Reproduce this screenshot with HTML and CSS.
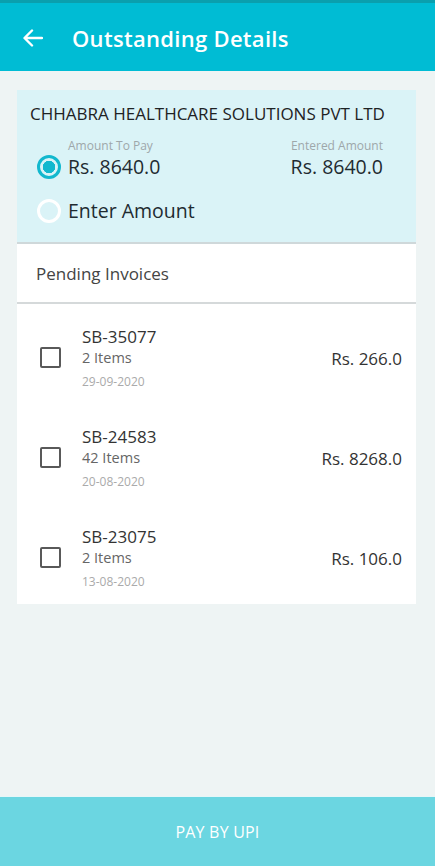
FILE: index.html
```html
<!DOCTYPE html>
<html lang="en">
<head>
    <meta charset="UTF-8">
    <meta name="viewport" content="width=device-width, initial-scale=1.0">
    <title>Outstanding Details</title>
    <link rel="stylesheet" href="styles.css">
</head>
<body>

<div class="page">
    <div class="app-bar">
        <svg class="back" width="20" height="18" viewBox="0 0 20 18">
            <path d="M19 9H2M9 1.5L1.5 9L9 16.5" fill="none" stroke="#fff" stroke-width="2.4" stroke-linecap="round" stroke-linejoin="round"/>
        </svg>
        <h1>Outstanding Details</h1>
    </div>

    <div class="content">
        <div class="card">
            <div class="summary">
                <div class="company">CHHABRA HEALTHCARE SOLUTIONS PVT LTD</div>
                <div class="amount-row">
                    <div class="option">
                        <span class="radio checked"></span>
                        <div class="amount-block">
                            <div class="label">Amount To Pay</div>
                            <div class="value">Rs. 8640.0</div>
                        </div>
                    </div>
                    <div class="amount-block right">
                        <div class="label">Entered Amount</div>
                        <div class="value">Rs. 8640.0</div>
                    </div>
                </div>
                <div class="option enter">
                    <span class="radio"></span>
                    <div class="value">Enter Amount</div>
                </div>
            </div>

            <div class="pending-head">Pending Invoices</div>

            <div class="invoices">
                <div class="invoice">
                    <span class="checkbox"></span>
                    <div class="invoice-info">
                        <div class="invoice-no">SB-35077</div>
                        <div class="items">2 Items</div>
                        <div class="date">29-09-2020</div>
                    </div>
                    <div class="invoice-amount">Rs. 266.0</div>
                </div>
                <div class="invoice">
                    <span class="checkbox"></span>
                    <div class="invoice-info">
                        <div class="invoice-no">SB-24583</div>
                        <div class="items">42 Items</div>
                        <div class="date">20-08-2020</div>
                    </div>
                    <div class="invoice-amount">Rs. 8268.0</div>
                </div>
                <div class="invoice">
                    <span class="checkbox"></span>
                    <div class="invoice-info">
                        <div class="invoice-no">SB-23075</div>
                        <div class="items">2 Items</div>
                        <div class="date">13-08-2020</div>
                    </div>
                    <div class="invoice-amount">Rs. 106.0</div>
                </div>
            </div>
        </div>
    </div>

    <button class="pay-btn">PAY BY UPI</button>
</div>

</body>
</html>
```

FILE: styles.css
```css
* {
    box-sizing: border-box;
}
body {
    margin: 0;
    font-family: "Open Sans", "Noto Sans", sans-serif;
    background-color: #eef4f4;
    color: #2b2f31;
}
.page {
    display: flex;
    flex-direction: column;
    min-height: 100vh;
}
.app-bar {
    display: flex;
    align-items: center;
    height: 71px;
    padding: 2px 0 0 23px;
    background-color: #00bcd4;
    border-top: 3px solid #0a9fae; /* status strip */
}
.back {
    margin-right: 29px;
}
.app-bar h1 {
    margin: 0;
    font-size: 22px;
    font-weight: 600;
    color: #fff;
    letter-spacing: 0.3px;
}
.content {
    flex: 1;
    padding: 19px 19px 0 17px;
}
.card {
    background-color: #fff;
}

/* top summary block */
.summary {
    background-color: #daf3f7;
    padding: 13px 33px 17px 20px;
    border-bottom: 2px solid #cfd8da;
}
.company {
    font-size: 17px;
    line-height: 22px;
    color: #1e2224;
    margin-left: -7px;
    white-space: nowrap;
}
.amount-row {
    display: flex;
    justify-content: space-between;
    align-items: flex-end;
    margin-top: 13px;
}
.option {
    display: flex;
    align-items: flex-end;
    gap: 7px;
}
.option.enter {
    align-items: center;
    margin-top: 16px;
}
.radio {
    width: 24px;
    height: 24px;
    border-radius: 50%;
    border: 3px solid #fff;
    margin-bottom: 2px;
    flex-shrink: 0;
}
.option.enter .radio {
    margin-bottom: 0;
}
.radio.checked {
    border-color: #12b8ce;
    background: radial-gradient(circle, #12b8ce 0 6px, transparent 6.5px);
}
.label {
    font-size: 12px;
    line-height: 15px;
    color: #9ea7aa;
    margin-bottom: 0;
}
.value {
    font-size: 19.5px;
    line-height: 28px;
    color: #1f2b31;
}
.amount-block.right {
    text-align: right;
}

.pending-head {
    height: 60px;
    display: flex;
    align-items: center;
    padding-left: 19px;
    font-size: 17px;
    color: #444;
    border-bottom: 2px solid #d5d9da;
}

/* invoice rows */
.invoice {
    display: flex;
    align-items: center;
    height: 100px;
    padding: 21px 14px 12px 23px;
}
.checkbox {
    width: 21px;
    height: 21px;
    border: 2px solid #595959;
    border-radius: 2px;
    margin: 0 21px 3px 0;
    flex-shrink: 0;
}
.invoice-info {
    flex: 1;
}
.invoice-no {
    font-size: 17px;
    line-height: 22px;
    color: #333;
}
.items {
    font-size: 14.5px;
    line-height: 20px;
    color: #666;
}
.date {
    font-size: 12px;
    line-height: 20px;
    margin-top: 4px;
    color: #aaa;
}
.invoice-amount {
    font-size: 17px;
    color: #333;
}

.pay-btn {
    height: 70px;
    margin-top: 20px;
    border: none;
    border-top: 1px solid #e6f6f8;
    background-color: #6bd6e1;
    color: #fff;
    font-family: "Open Sans", sans-serif;
    font-size: 16px;
    letter-spacing: 0.2px;
}
```
